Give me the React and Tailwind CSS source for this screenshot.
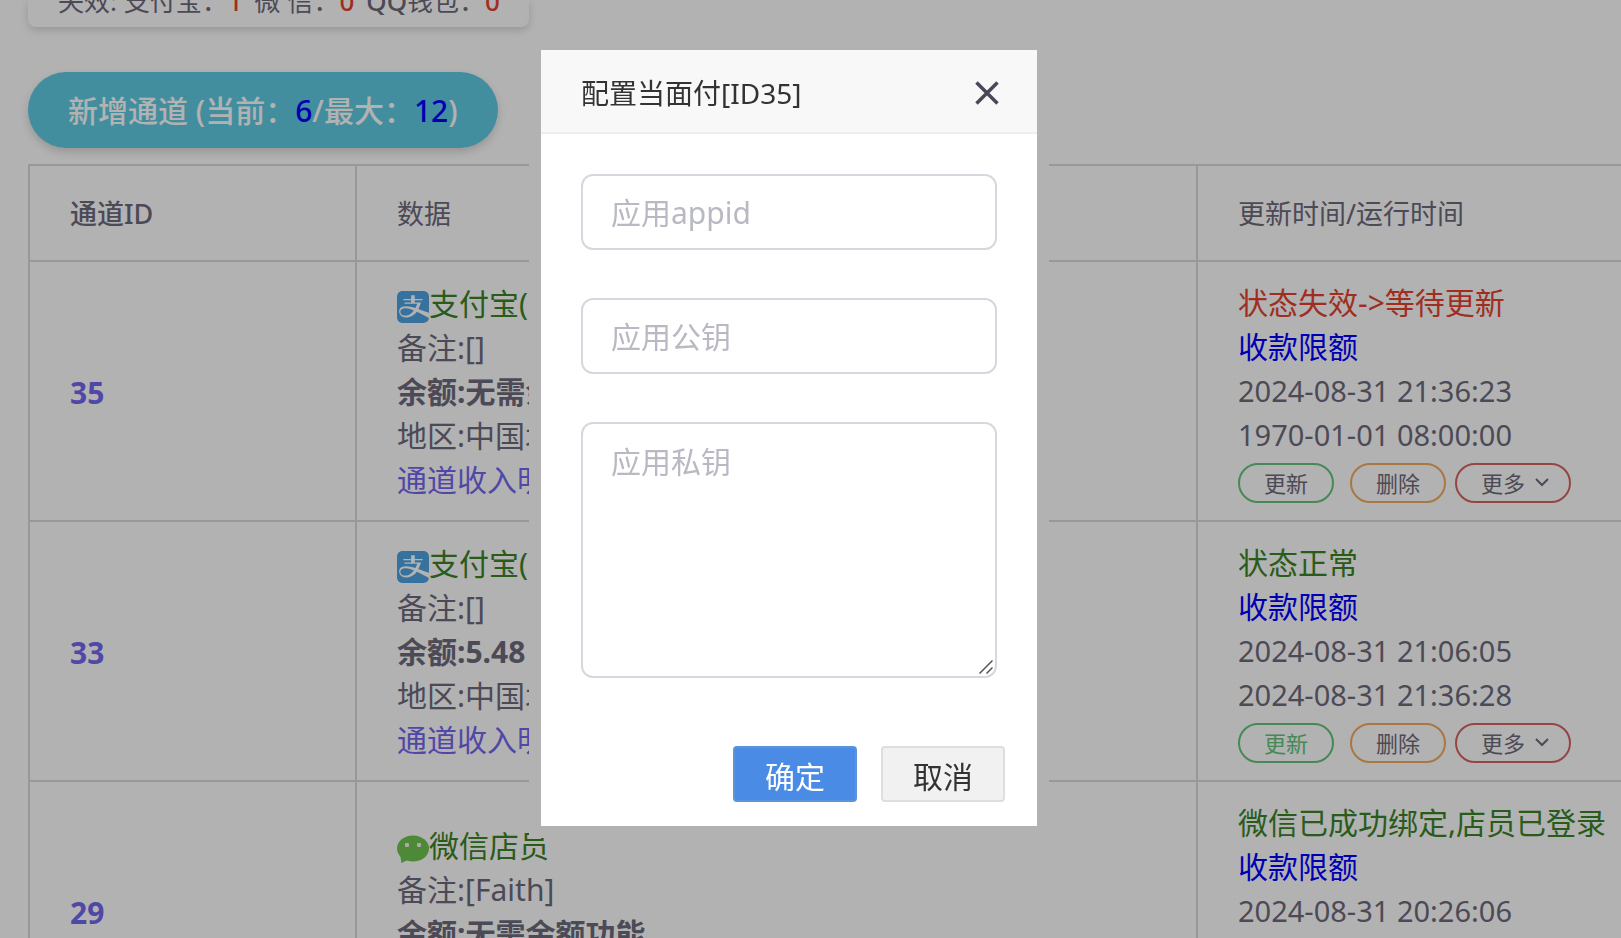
import React from 'react';
import { FaAlipay } from 'react-icons/fa';

const channels = [
	{
		id: 35,
		type: 'alipay',
		name: '支付宝(当面付)',
		remark: '[]',
		balance: '无需余额功能',
		region: '中国北京',
		status: '状态失效->等待更新',
		ok: false,
		updatedAt: '2024-08-31 21:36:23',
		runAt: '1970-01-01 08:00:00',
		refreshed: false,
	},
	{
		id: 33,
		type: 'alipay',
		name: '支付宝(当面付)',
		remark: '[]',
		balance: '5.48',
		region: '中国北京',
		status: '状态正常',
		ok: true,
		updatedAt: '2024-08-31 21:06:05',
		runAt: '2024-08-31 21:36:28',
		refreshed: true,
	},
	{
		id: 29,
		type: 'wechat',
		name: '微信店员',
		remark: '[Faith]',
		balance: '无需余额功能',
		region: null,
		status: '微信已成功绑定,店员已登录',
		ok: true,
		updatedAt: '2024-08-31 20:26:06',
		runAt: '2024-08-31 21:36:28',
		refreshed: true,
	},
];

function WechatIcon() {
	return (
		<svg className="inline-block h-8 w-8 align-middle" viewBox="0 0 32 32" aria-hidden="true">
			<path d="M3 21 L4.500 30 L13 26 Z" fill="#6fc44e" />
			<ellipse cx="16" cy="15.500" rx="16" ry="13" fill="#6fc44e" />
			<rect x="8" y="10" width="4" height="4" rx="1" fill="#f0f8ec" />
			<rect x="20" y="10" width="4" height="4" rx="1" fill="#f0f8ec" />
		</svg>
	);
}

function ChannelIcon({ type }) {
	if (type === 'wechat') {
		return <WechatIcon />;
	}
	return (
		<FaAlipay
			viewBox="0 32 448 448"
			className="inline-block h-8 w-8 rounded-[5px] bg-white align-middle text-[#50a3e3]"
			aria-hidden="true"
		/>
	);
}

function PillButton({ className, children }) {
	return (
		<button type="button" className={`flex h-10 items-center rounded-full border-2 px-6 text-[22px] leading-none ${className}`}>
			{children}
		</button>
	);
}

function ChannelRow({ channel }) {
	return (
		<tr>
			<td className="border-2 border-[#dadada] px-10 pt-5 pb-4 font-bold text-[#7367f0]">{channel.id}</td>
			<td className="border-2 border-[#dadada] px-10 pt-[19px] pb-[17px]">
				<div className="h-11 text-[#3c8427]">
					<ChannelIcon type={channel.type} />
					{channel.name}
				</div>
				<div>备注:{channel.remark}</div>
				<div className="font-bold">余额:{channel.balance}</div>
				{channel.region && <div>地区:{channel.region}</div>}
				<a href="#income" className="block text-[#7367f0]">通道收入明细</a>
			</td>
			<td className="border-2 border-[#dadada] px-10 pt-[19px] pb-[17px] whitespace-nowrap">
				<div className={channel.ok ? 'text-[#3c8427]' : 'text-[#e6432f]'}>{channel.status}</div>
				<a href="#limit" className="block text-[#0000ff]">收款限额</a>
				<div className="text-[29px]">{channel.updatedAt}</div>
				<div className="text-[29px]">{channel.runAt}</div>
				<div className="mt-1.5 flex">
					<PillButton className={`mr-4 border-[#65c57b] ${channel.refreshed ? 'text-[#65c57b]' : ''}`}>更新</PillButton>
					<PillButton className="mr-[9px] border-[#f3ab5d]">删除</PillButton>
					<PillButton className="border-[#d66461]">
						更多
						<svg className="-mr-1 ml-2.5 h-2.5 w-3.5" viewBox="0 0 14 10" fill="none" stroke="currentColor" strokeWidth="2" aria-hidden="true">
							<path d="M1 1 L7 7 L13 1" />
						</svg>
					</PillButton>
				</div>
			</td>
		</tr>
	);
}

function ChannelTable() {
	return (
		<table className="mt-4 w-full min-w-[1618px] table-fixed border-collapse text-left text-[30px] leading-[44px]">
			<colgroup>
				<col className="w-[327px]" />
				<col className="w-[841px]" />
				<col />
			</colgroup>
			<thead>
				<tr className="h-24 text-[27px]">
					<th className="border-2 border-[#dadada] px-10 pt-0.5 font-medium">通道ID</th>
					<th className="border-2 border-[#dadada] px-10 pt-0.5 font-normal">数据</th>
					<th className="border-2 border-[#dadada] px-10 pt-0.5 font-normal">更新时间/运行时间</th>
				</tr>
			</thead>
			<tbody>
				{channels.map((channel) => (
					<ChannelRow key={channel.id} channel={channel} />
				))}
			</tbody>
		</table>
	);
}

function ConfigDialog() {
	const field =
		'block w-full rounded-xl border-2 border-[#d8d6de] bg-white px-7 text-[30px] text-[#6e6b7b] outline-none placeholder:text-[#b9b9c3]';

	return (
		<div className="fixed inset-0 flex items-start justify-center bg-black/30 pt-[50px] pr-[43px]">
			<div
				role="dialog"
				aria-labelledby="dialog-title"
				className="w-[496px] bg-white shadow-[0_0_0_12px_#b2b2b2]"
			>
				<header className="flex h-[84px] items-center justify-between border-b-2 border-[#eeeeee] bg-[#f8f8f8] pt-1 pr-[38px] pl-10">
					<h2 id="dialog-title" className="text-[28px] text-[#333333]">配置当面付[ID35]</h2>
					<button type="button" aria-label="关闭">
						<svg className="h-6 w-6" viewBox="0 0 24 24" fill="none" stroke="#4a4858" strokeWidth="3.500" aria-hidden="true">
							<path d="M1.500 1.500 L22.500 22.500 M22.500 1.500 L1.500 22.500" />
						</svg>
					</button>
				</header>
				<form className="px-10 pt-10">
					<input type="text" aria-label="应用appid" placeholder="应用appid" className={`${field} h-[76px]`} />
					<input type="text" aria-label="应用公钥" placeholder="应用公钥" className={`${field} mt-12 h-[76px]`} />
					<div className="relative mt-12">
						<textarea
							aria-label="应用私钥"
							placeholder="应用私钥"
							className={`${field} h-64 resize-none py-4 leading-[44px]`}
						/>
						<svg
							className="absolute right-1 bottom-1 h-3.5 w-3.5"
							viewBox="0 0 14 14"
							stroke="#555555"
							strokeWidth="1.500"
							aria-hidden="true"
						>
							<path d="M0.500 13.500 L13.500 0.500 M7.500 13.500 L13.500 7.500" />
						</svg>
					</div>
				</form>
				<footer className="flex justify-end gap-6 px-8 pt-[68px] pb-6">
					<button type="button" className="h-14 w-[124px] rounded border-2 border-[#5c94d9] bg-[#4a8be5] pt-1.5 text-[30px] leading-none text-white">
						确定
					</button>
					<button type="button" className="h-14 w-[124px] rounded border-2 border-[#dedede] bg-[#f1f1f1] pt-1.5 text-[30px] leading-none text-[#333333]">
						取消
					</button>
				</footer>
			</div>
		</div>
	);
}

export default function App() {
	return (
		<div className="h-screen overflow-hidden bg-white font-['Noto_Sans','Noto_Sans_CJK_SC',sans-serif] text-[#6e6b7b]">
			<main className="pl-7">
				<section className="flex h-[27px] w-[501px] items-end gap-3 rounded-b-lg px-[30px] pb-2 text-[26px] leading-[36px] whitespace-nowrap shadow-[0_3px_8px_rgba(0,0,0,0.16)]">
					<span>失效: 支付宝：<span className="font-medium text-[#e6432f]">1</span></span>
					<span>微 信：<span className="font-medium text-[#e6432f]">0</span></span>
					<span><span className="font-medium">QQ</span>钱包：<span className="font-medium text-[#e6432f]">0</span></span>
				</section>
				<button
					type="button"
					className="mt-[45px] block h-[76px] rounded-full bg-[#60cce2] px-10 text-[30px] font-medium text-white shadow-[0_4px_8px_rgba(0,0,0,0.16)]"
				>
					新增通道 (当前：<span className="text-[#0000ff]">6</span>/最大：<span className="text-[#0000ff]">12</span>)
				</button>
				<ChannelTable />
			</main>
			<ConfigDialog />
		</div>
	);
}
